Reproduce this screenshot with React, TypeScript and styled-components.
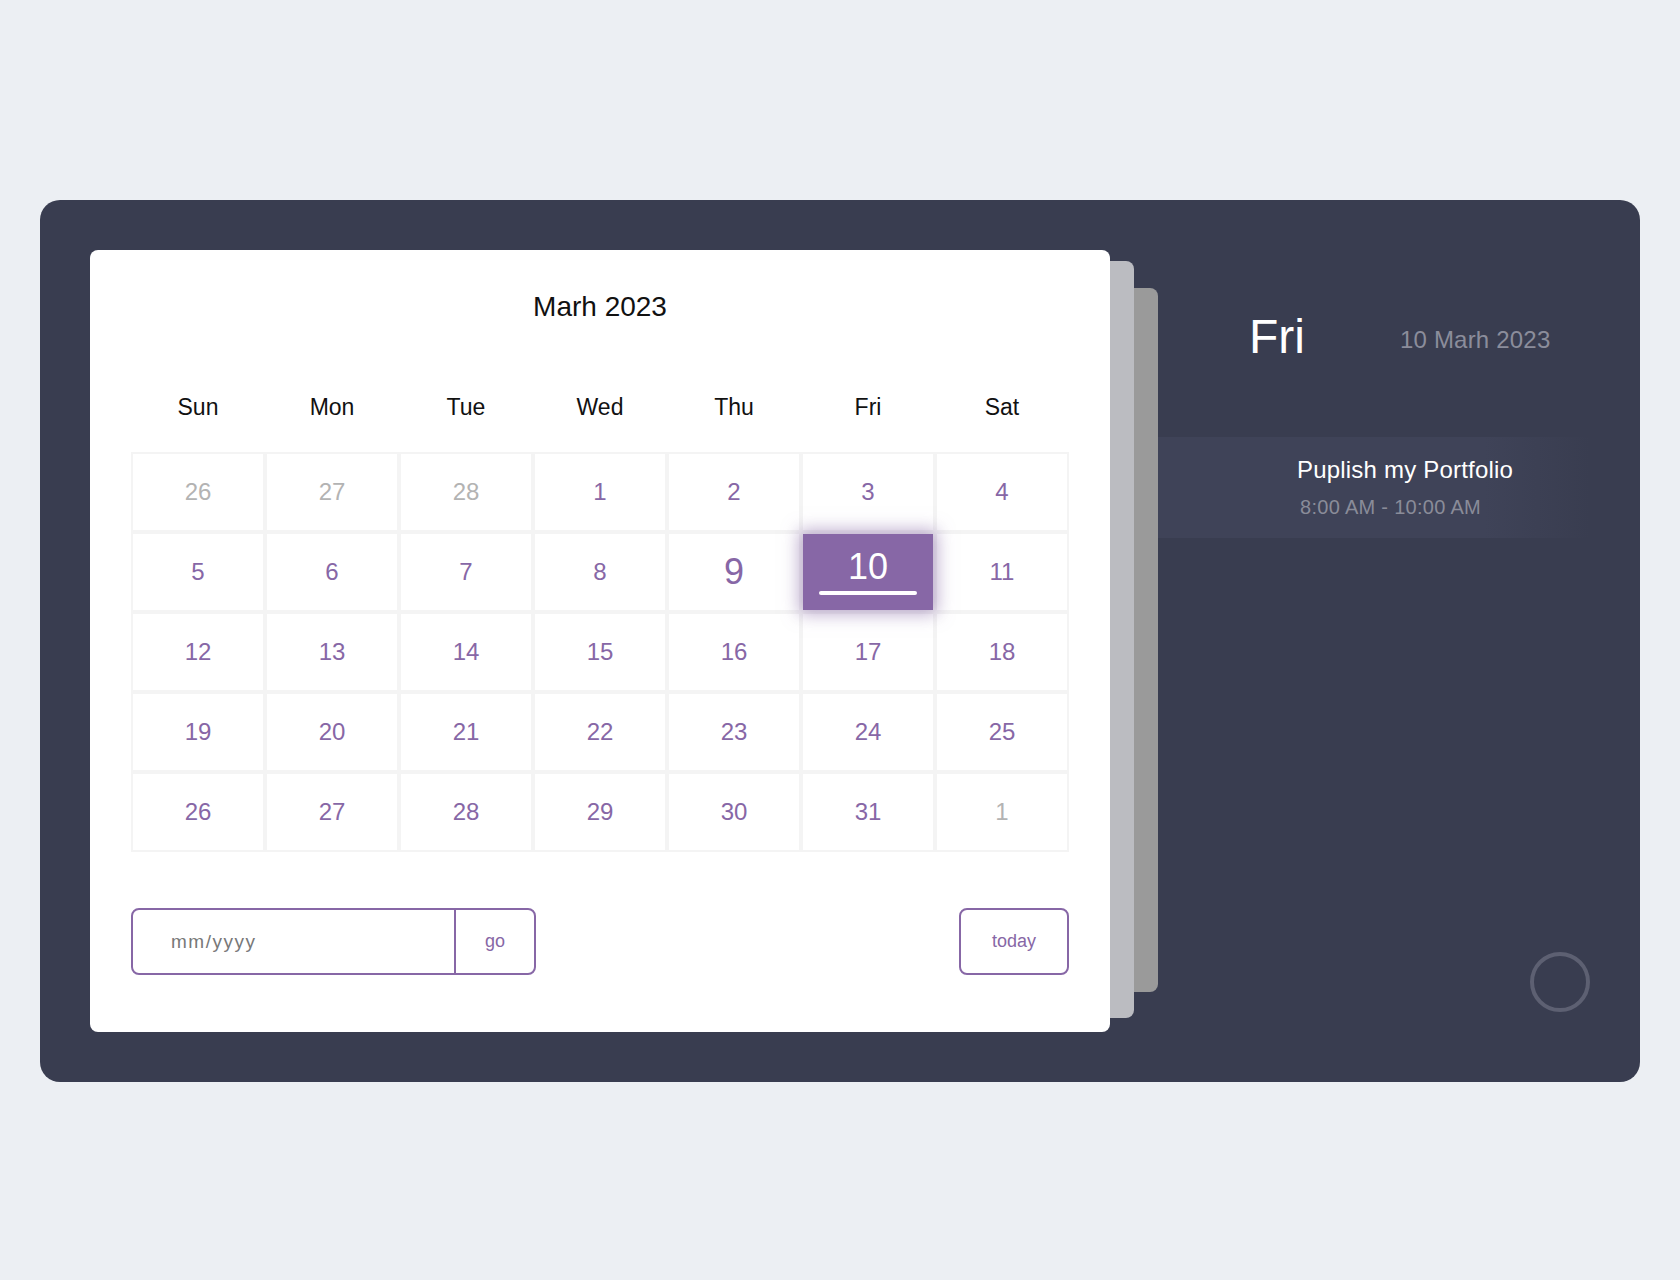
import React from "react"
import styled, { createGlobalStyle } from "styled-components"

const purple = "#8767a6"

const GlobalStyle = createGlobalStyle`
    html, body {
        margin: 0;
        padding: 0;
    }
    body {
        background: #eceff3;
        font-family: "Liberation Sans", Arial, sans-serif;
    }
`

const Page = styled.div`
    min-height: 100vh;
    box-sizing: border-box;
    padding-top: 200px;
    display: flex;
    align-items: flex-start;
    justify-content: center;
`

const Shell = styled.div`
    width: 1600px;
    height: 882px;
    box-sizing: border-box;
    padding: 50px;
    background: #393d50;
    border-radius: 20px;
    display: flex;
`

const CardStack = styled.div`
    position: relative;
    width: 1020px;
    flex-shrink: 0;
`

const Sheet = styled.div<{ $shift: number; $top: number; $bottom: number; $color: string; $layer: number }>`
    position: absolute;
    left: 0;
    right: ${(p) => -p.$shift}px;
    top: ${(p) => p.$top}px;
    bottom: ${(p) => p.$bottom}px;
    background: ${(p) => p.$color};
    border-radius: 8px;
    z-index: ${(p) => p.$layer};
`

const Card = styled.div`
    position: relative;
    z-index: 3;
    height: 100%;
    box-sizing: border-box;
    padding: 43px 41px 56px;
    background: #fff;
    border-radius: 8px;
    display: flex;
    flex-direction: column;
`

const MonthTitle = styled.div`
    font-size: 28px;
    line-height: 1;
    text-align: center;
    color: #111;
`

const WeekRow = styled.div`
    display: grid;
    grid-template-columns: repeat(7, 134px);
    margin-top: 75px;
    font-size: 23px;
    line-height: 1;
    color: #111;
    text-align: center;
`

const DayGrid = styled.div`
    display: grid;
    grid-template-columns: repeat(7, 134px);
    grid-auto-rows: 80px;
    margin-top: 33px;
`

const Cell = styled.div<{ $muted?: boolean; $big?: boolean }>`
    box-sizing: border-box;
    border: 2px solid #f4f4f4;
    display: flex;
    align-items: center;
    justify-content: center;
    font-size: ${(p) => (p.$big ? 36 : 24)}px;
    color: ${(p) => (p.$muted ? "#b3b3b3" : purple)};
`

const Selected = styled.div`
    position: relative;
    z-index: 1;
    width: 100%;
    height: 100%;
    background: ${purple};
    box-shadow: 0 0 16px 4px rgba(135, 103, 166, 0.55);
    display: flex;
    flex-direction: column;
    align-items: center;
    justify-content: center;
    color: #fff;
    font-size: 36px;
    line-height: 1;
`

const Underline = styled.span`
    width: 98px;
    height: 4px;
    margin-top: 6px;
    border-radius: 2px;
    background: #fff;
`

const FormRow = styled.div`
    display: flex;
    justify-content: space-between;
    margin-top: 56px;
    height: 67px;
`

const InputGroup = styled.div`
    width: 405px;
    box-sizing: border-box;
    border: 2px solid ${purple};
    border-radius: 8px;
    display: flex;
    overflow: hidden;
`

const DateInput = styled.input`
    flex: 1;
    min-width: 0;
    border: none;
    outline: none;
    padding: 0 0 0 38px;
    font-family: inherit;
    font-size: 19px;
    letter-spacing: 1.5px;
    color: #555;
    background: transparent;
    &::placeholder {
        color: #787878;
    }
`

const GoButton = styled.button`
    width: 80px;
    border: none;
    border-left: 2px solid ${purple};
    background: transparent;
    font-family: inherit;
    font-size: 18px;
    color: ${purple};
    cursor: pointer;
`

const TodayButton = styled.button`
    width: 110px;
    box-sizing: border-box;
    border: 2px solid ${purple};
    border-radius: 8px;
    background: #fff;
    font-family: inherit;
    font-size: 18px;
    color: ${purple};
    cursor: pointer;
`

const SidePanel = styled.div`
    flex: 1;
    display: flex;
    flex-direction: column;
`

const DayHeader = styled.div`
    display: flex;
    align-items: center;
    gap: 95px;
    margin-top: 63px;
    padding-left: 139px;
`

const DayName = styled.div`
    font-size: 48px;
    line-height: 1;
    color: #fff;
`

const FullDate = styled.div`
    margin-top: 6px;
    font-size: 24px;
    line-height: 1;
    letter-spacing: 0.2px;
    color: #8b8d9b;
`

const EventBand = styled.div`
    margin-top: 76px;
    height: 101px;
    box-sizing: border-box;
    padding: 21px 0 0 187px;
    background: linear-gradient(90deg, #3f4358 0%, #3f4358 78%, rgba(63, 67, 88, 0) 100%);
`

const EventTitle = styled.div`
    font-size: 24px;
    line-height: 1;
    letter-spacing: 0.2px;
    color: #fff;
`

const EventTime = styled.div`
    margin-top: 15px;
    padding-left: 3px;
    font-size: 20px;
    line-height: 1;
    letter-spacing: 0.3px;
    color: #8a8c99;
`

const Ring = styled.div`
    margin-top: auto;
    margin-bottom: 20px;
    align-self: flex-end;
    width: 60px;
    height: 60px;
    box-sizing: border-box;
    border: 4px solid #5d6072;
    border-radius: 50%;
`

const weekDays = ["Sun", "Mon", "Tue", "Wed", "Thu", "Fri", "Sat"]

// prev-month 26..28, March 1..31, next-month 1
const days: { n: number; muted?: boolean }[] = [
    { n: 26, muted: true },
    { n: 27, muted: true },
    { n: 28, muted: true },
    ...Array.from({ length: 31 }, (_, i) => ({ n: i + 1 })),
    { n: 1, muted: true },
]

const App: React.FC = () => {
    return (
        <>
            <GlobalStyle />
            <Page>
                <Shell>
                    <CardStack>
                        <Sheet $shift={48} $top={38} $bottom={40} $color="#9a9a9a" $layer={1} />
                        <Sheet $shift={24} $top={11} $bottom={14} $color="#bbbcc1" $layer={2} />
                        <Card>
                            <MonthTitle>Marh 2023</MonthTitle>
                            <WeekRow>
                                {weekDays.map((d) => (
                                    <div key={d}>{d}</div>
                                ))}
                            </WeekRow>
                            <DayGrid>
                                {days.map((d, i) =>
                                    d.n === 10 && !d.muted ? (
                                        <Cell key={i}>
                                            <Selected>
                                                <span>10</span>
                                                <Underline />
                                            </Selected>
                                        </Cell>
                                    ) : (
                                        <Cell key={i} $muted={d.muted} $big={d.n === 9 && !d.muted}>
                                            {d.n}
                                        </Cell>
                                    )
                                )}
                            </DayGrid>
                            <FormRow>
                                <InputGroup>
                                    <DateInput placeholder="mm/yyyy" />
                                    <GoButton>go</GoButton>
                                </InputGroup>
                                <TodayButton>today</TodayButton>
                            </FormRow>
                        </Card>
                    </CardStack>
                    <SidePanel>
                        <DayHeader>
                            <DayName>Fri</DayName>
                            <FullDate>10 Marh 2023</FullDate>
                        </DayHeader>
                        <EventBand>
                            <EventTitle>Puplish my Portfolio</EventTitle>
                            <EventTime>8:00 AM - 10:00 AM</EventTime>
                        </EventBand>
                        <Ring />
                    </SidePanel>
                </Shell>
            </Page>
        </>
    )
}

export default App
